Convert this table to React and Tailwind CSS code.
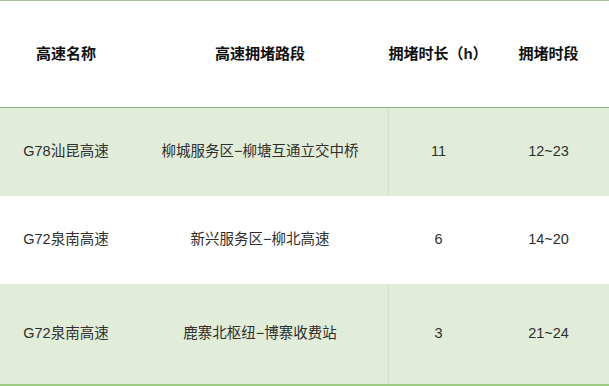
const rows = [
  { road: "G78汕昆高速", section: "柳城服务区−柳塘互通立交中桥", hours: "11", period: "12~23", green: true, h: "h-[88px]" },
  { road: "G72泉南高速", section: "新兴服务区−柳北高速", hours: "6", period: "14~20", green: false, h: "h-[88px]" },
  { road: "G72泉南高速", section: "鹿寨北枢纽−博寨收费站", hours: "3", period: "21~24", green: true, h: "h-[100px]" },
]

const cols = "grid grid-cols-[132px_256px_100px_121px]"

export default function App() {
  return (
    <div className="w-[609px] h-[386px] bg-white overflow-hidden font-['Liberation_Sans','Noto_Sans_CJK_SC',sans-serif]">
      <div className="border-t border-[#a9c59a]">
        <div className={`${cols} h-[107px] items-center text-center text-[15px] font-bold text-[#111111] border-b border-[#8fae80]`}>
          <div>高速名称</div>
          <div>高速拥堵路段</div>
          <div>拥堵时长（h）</div>
          <div>拥堵时段</div>
        </div>
        {rows.map((r, i) => (
          <div
            key={i}
            className={`${cols} ${r.h} text-center text-[14.5px] text-[#2e2e2e] ${r.green ? "bg-[#e2edd9]" : "bg-white"}`}
          >
            <div className="flex items-center justify-center">{r.road}</div>
            <div className="flex items-center justify-center">{r.section}</div>
            <div className={`flex items-center justify-center border-l ${r.green ? "border-[#d3e0c9]" : "border-transparent"}`}>{r.hours}</div>
            <div className="flex items-center justify-center">{r.period}</div>
          </div>
        ))}
        <div className="h-[2px] bg-[#9dcb84]" />
      </div>
    </div>
  )
}
